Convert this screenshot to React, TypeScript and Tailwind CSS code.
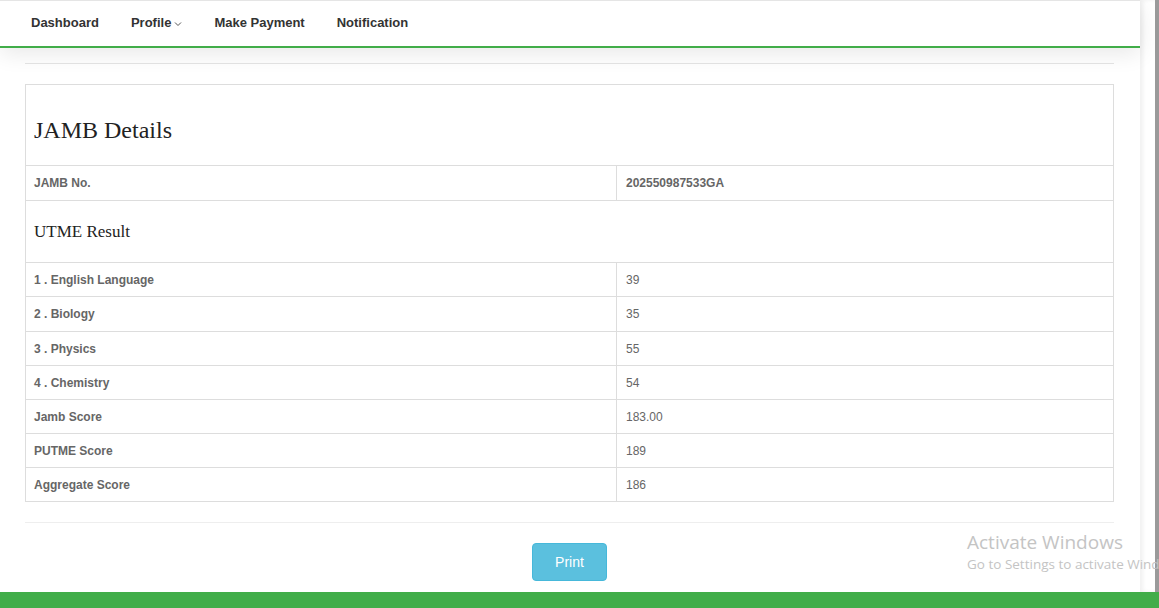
import { FC } from "react";

// ── Data ──────────────────────────────────────────────────────────────────────

const SUBJECTS = [
  { label: "1 . English Language", value: "39" },
  { label: "2 . Biology", value: "35", tall: true },
  { label: "3 . Physics", value: "55" },
  { label: "4 . Chemistry", value: "54" },
  { label: "Jamb Score", value: "183.00" },
  { label: "PUTME Score", value: "189" },
  { label: "Aggregate Score", value: "186" },
];

// ── Row ───────────────────────────────────────────────────────────────────────

const Row: FC<{ label: string; value: string; boldValue?: boolean; h?: string }> = ({ label, value, boldValue, h = "h-[34px]" }) => (
  <div className={`grid grid-cols-[591px_1fr] border-t border-[#dddddd] ${h}`}>
    <div className="flex items-center border-r border-[#dddddd] px-2 text-[12px] font-bold text-[#666666]">{label}</div>
    <div className={`flex items-center px-[9px] text-[12px] text-[#666666] ${boldValue ? "font-bold" : ""}`}>{value}</div>
  </div>
);

// ── App ───────────────────────────────────────────────────────────────────────

export default function App() {
  return (
    <div className="relative h-[608px] w-[1159px] overflow-hidden bg-white font-['Liberation_Sans',Arial,sans-serif]">
      <div className="flex h-[592px]">
        {/* Main column */}
        <div className="flex w-[1140px] flex-col">
          {/* Navbar */}
          <header className="relative z-10 flex h-[48px] shrink-0 items-center gap-8 border-t border-b-2 border-t-[#e5e5e5] border-b-[#41ad49] bg-white px-[31px] pb-[2px] text-[13px] font-bold text-[#333333] shadow-[0_6px_22px_rgba(0,0,0,0.09)]">
            <span>Dashboard</span>
            <span className="flex items-center gap-[3px]">
              Profile
              <svg width="8" height="6" viewBox="0 0 8 6" fill="none" className="mt-[2px]">
                <path d="M1 1.5L4 4.5L7 1.5" stroke="#555" strokeWidth="1" />
              </svg>
            </span>
            <span>Make Payment</span>
            <span>Notification</span>
          </header>

          <div className="flex flex-col px-[25px] pr-[26px]">
            <div className="mt-[15px] border-t border-[#e5e5e5]" />

            {/* JAMB table */}
            <div className="mt-[20px] border border-[#dddddd]">
              <div className="flex h-[80px] items-end px-2 pb-[17px] font-['Liberation_Serif',serif] text-[24px] text-[#222222]">
                JAMB Details
              </div>
              <Row label="JAMB No." value="202550987533GA" boldValue h="h-[35px]" />
              <div className="flex h-[62px] items-center border-t border-[#dddddd] px-2 font-['Liberation_Serif',serif] text-[17px] text-[#222222]">
                UTME Result
              </div>
              {SUBJECTS.map((s) => (
                <Row key={s.label} label={s.label} value={s.value} h={s.tall ? "h-[35px]" : "h-[34px]"} />
              ))}
            </div>

            <div className="mt-[20px] border-t border-[#eeeeee]" />

            <div className="mt-[20px] flex justify-center">
              <button
                type="button"
                className="h-[38px] w-[75px] rounded-[4px] border border-[#46b8da] bg-[#5bc0de] text-[14px] text-white"
              >
                Print
              </button>
            </div>
          </div>
        </div>

        {/* Right gutter + scrollbar */}
        <div className="w-[15px] bg-white shadow-[inset_3px_0_4px_rgba(0,0,0,0.06)]" />
        <div className="w-[4px] bg-[#9a9a9a]" />
      </div>

      {/* Footer bar */}
      <div className="h-[16px] bg-[#41ad49]" />

      {/* Windows activation watermark */}
      <div className="pointer-events-none absolute left-[967px] top-[530px] whitespace-nowrap font-['Open_Sans',sans-serif] text-[#c4c4c4]">
        <div className="text-[19px] leading-[24px]">Activate Windows</div>
        <div className="text-[13.5px] leading-[20px]">Go to Settings to activate Windows.</div>
      </div>
    </div>
  );
}
